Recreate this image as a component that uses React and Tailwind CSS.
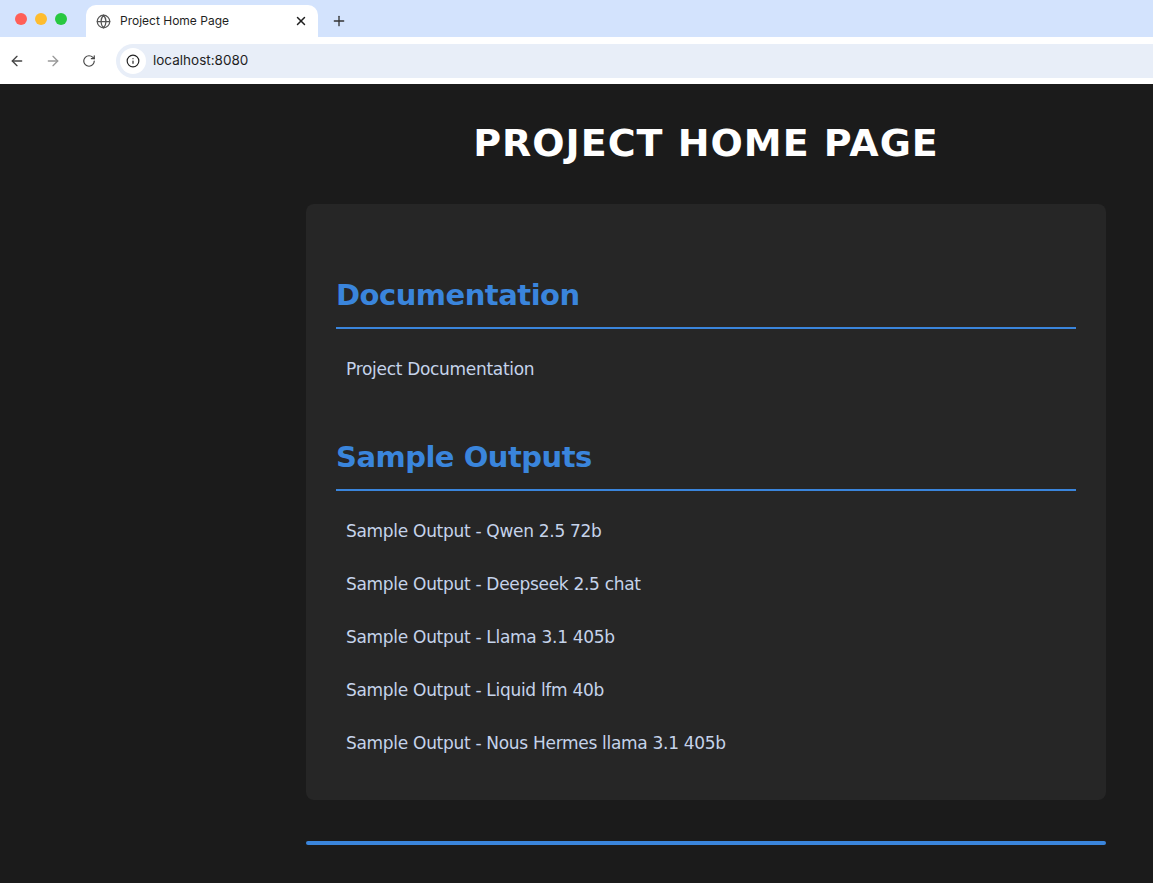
import { ArrowLeft, ArrowRight, RotateCw, Info, Globe, X, Plus } from "lucide-react";

const outputs = [
  "Sample Output - Qwen 2.5 72b",
  "Sample Output - Deepseek 2.5 chat",
  "Sample Output - Llama 3.1 405b",
  "Sample Output - Liquid lfm 40b",
  "Sample Output - Nous Hermes llama 3.1 405b",
];

function Section({ title, items }) {
  return (
    <div>
      <h2 className="text-[29px] font-bold text-[#3a85dc] leading-none pb-[17px] border-b-2 border-[#3a85dc] tracking-[-0.5px]">
        {title}
      </h2>
      <ul className="mt-[14px]">
        {items.map((t) => (
          <li key={t} className="pl-[10px] h-[53px] flex items-center text-[17px] text-[#c5d3ea] tracking-[-0.3px]">
            {t}
          </li>
        ))}
      </ul>
    </div>
  );
}

export default function App() {
  return (
    <div className="w-[1153px] h-[883px] overflow-hidden bg-[#1b1b1b]" style={{ fontFamily: "'DejaVu Sans', Verdana, sans-serif" }}>
      <div className="bg-[#d3e3fd] h-[37px] flex items-end" style={{ fontFamily: "Inter, sans-serif" }}>
        <div className="flex items-center gap-[8px] pl-[15px] h-[37px] w-[86px]">
          <span className="w-3 h-3 rounded-full bg-[#ff5f57]" />
          <span className="w-3 h-3 rounded-full bg-[#febc2e]" />
          <span className="w-3 h-3 rounded-full bg-[#28c840]" />
        </div>
        <div className="bg-white h-[32px] w-[232px] rounded-t-[10px] flex items-center px-[10px] text-[12px] text-[#1f1f1f]">
          <Globe size={15} className="text-[#555]" />
          <span className="ml-[9px] flex-1">Project Home Page</span>
          <X size={14} strokeWidth={2.5} />
        </div>
        <div className="h-[32px] flex items-center ml-[13px]"><Plus size={16} className="text-[#333]" /></div>
      </div>
      <div className="bg-white h-[47px] flex items-center text-[#444]" style={{ fontFamily: "Inter, sans-serif" }}>
        <ArrowLeft size={16} className="ml-[9px]" />
        <ArrowRight size={16} className="ml-[20px] text-[#999]" />
        <RotateCw size={14} className="ml-[21px]" />
        <div className="ml-[20px] flex-1 h-[34px] rounded-l-full bg-[#e8eef8] flex items-center">
          <div className="ml-[4px] w-[26px] h-[26px] rounded-full bg-white flex items-center justify-center"><Info size={14} className="text-[#222]" /></div>
          <span className="ml-[7px] text-[13.5px] text-[#1f1f1f]">localhost:8080</span>
        </div>
      </div>
      <div className="ml-[306px] w-[800px]">
        <h1 className="text-center text-white font-bold text-[38px] tracking-[1px] pt-[36px] h-[120px] leading-[46px]">PROJECT HOME PAGE</h1>
        <div className="bg-[#262626] rounded-[8px] px-[30px] pt-[77px] pb-[30px] flex flex-col gap-[47px]">
          <Section title="Documentation" items={["Project Documentation"]} />
          <Section title="Sample Outputs" items={outputs} />
        </div>
        <div className="mt-[41px] h-[4px] rounded bg-[#3a85dc]" />
      </div>
    </div>
  );
}
